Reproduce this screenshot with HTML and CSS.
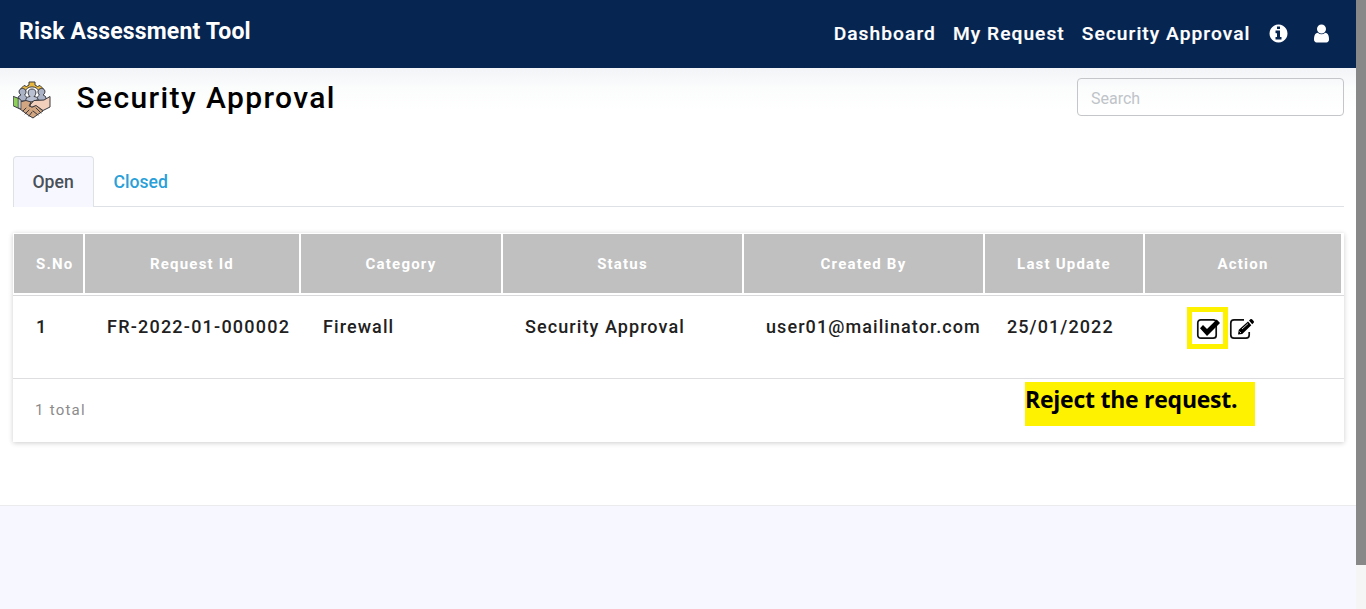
FILE: index.html
```
<!DOCTYPE html>
<html lang="en">
<head>
<meta charset="utf-8">
<title>Risk Assessment Tool</title>
<link rel="stylesheet" href="styles.css">
</head>
<body>
<div class="page">
  <header class="navbar">
    <div class="brand">Risk Assessment Tool</div>
    <nav class="nav">
      <a>Dashboard</a>
      <a>My Request</a>
      <a>Security Approval</a>
      <svg class="nav-info" viewBox="0 0 1792 1792"><path d="M1152 1376v-160q0-14-9-23t-23-9h-96v-512q0-14-9-23t-23-9h-320q-14 0-23 9t-9 23v160q0 14 9 23t23 9h96v320h-96q-14 0-23 9t-9 23v160q0 14 9 23t23 9h448q14 0 23-9t9-23zm-128-896v-160q0-14-9-23t-23-9h-192q-14 0-23 9t-9 23v160q0 14 9 23t23 9h192q14 0 23-9t9-23zm640 416q0 209-103 385.5t-279.5 279.5-385.5 103-385.5-103-279.5-279.5-103-385.5 103-385.5 279.5-279.5 385.5-103 385.5 103 279.5 279.5 103 385.5z"/></svg>
      <svg class="nav-user" viewBox="0 0 1792 1792"><path d="M1536 1399q0 109-62.500 187t-150.500 78h-854q-88 0-150.500-78t-62.500-187q0-85 8.500-160.500t31.500-152 58.500-131 94-89 134.500-34.500q131 128 313 128t313-128q76 0 134.500 34.500t94 89 58.500 131 31.500 152 8.500 160.500zm-256-887q0 159-112.500 271.500t-271.500 112.500-271.500-112.500-112.500-271.500 112.500-271.500 271.500-112.500 271.500 112.500 112.500 271.500z"/></svg>
    </nav>
  </header>
  <main class="content">
    <div class="title-row">
      <svg class="logo" viewBox="0 0 38 38" stroke="#3a3a40" stroke-width="1" stroke-linejoin="round" stroke-linecap="round">
        <path fill="#e9b83e" d="M9 10 8 7.500 11 4.500 13.500 5.500 16 4V1H22V4L24.500 5.500 27 4.500 30 7.500 29 10 26 10A8 8 0 0 0 12 10Z"/>
        <path fill="#aab2c6" d="M5 17C5 15 7 14.500 8 14 5 12 5.500 7.500 9.500 7.500S14 12 11.500 14C13 15 14 16 14 20H5Z"/>
        <path fill="#aab2c6" d="M33 17C33 15 31 14.500 30 14 33 12 32.500 7.500 28.500 7.500S24 12 26.500 14C25 15 24 16 24 20H33Z"/>
        <path fill="#b9c0d1" d="M12.500 21C12.500 17 14 16 17 15.500 14 13 14.500 8 19 8S24 13 21 15.500C24 16 25.500 17 25.500 21Z"/>
        <path fill="#edc3a5" d="M18 21 24 19 31 20V28L20 36 17 35Z"/>
        <path fill="#d3a682" d="M7 21 13 19.500 18 21 16 25 20 26 23 24 30 30 27 32 24 34 20 37 15 34 7 28Z"/>
        <path fill="#f1cfba" d="M17 24 21 19.500 31 19 37 15.500V26L30 29.500 23 24.500 19 26Z"/>
        <path fill="#8fd05b" d="M.600 15.500 7 18V28L.600 25Z"/>
        <path fill="#c5cbda" stroke-width=".7" d="M5.500 17.500 8 19V28L5.500 27Z"/>
        <path fill="none" d="M10 30 13 27M12 33 16 29M16 35 19 31M20 30 25 34M23 27 28 32"/>
      </svg>
      <h1>Security Approval</h1>
      <input class="search" type="text" placeholder="Search">
    </div>
    <div class="tabs">
      <a class="tab tab-active">Open</a>
      <a class="tab">Closed</a>
    </div>
    <section class="card">
      <div class="grid head">
        <div>S.No</div><div>Request Id</div><div>Category</div><div>Status</div><div>Created By</div><div>Last Update</div><div>Action</div>
      </div>
      <div class="grid row">
        <div>1</div><div class="request-id">FR-2022-01-000002</div><div>Firewall</div><div>Security Approval</div><div>user01@mailinator.com</div><div>25/01/2022</div>
        <div class="actions">
          <span class="highlight"><svg class="icon" viewBox="0 0 26 22"><rect x="1.800" y="1.800" width="18.400" height="18.400" rx="3"/><path class="solid" d="M4 10.200 7 7 11 11 20.700 1.500 24 5 11 18Z"/></svg></span>
          <svg class="icon" viewBox="0 0 26 22"><path d="M15 1.800H5Q1.800 1.800 1.800 5V17Q1.800 20.200 5 20.200H17Q20.200 20.200 20.200 17V14"/><path class="solid" d="M9 16.500 9.800 11.800 19 3.500 22.300 7.200 13.200 15.900ZM20 2.600 21.700 1.100Q22.300.700 23 1.300L24.800 3.300Q25.300 4 24.700 4.700L23.200 6.300Z"/><path class="shine" d="M13 11 19 5.600M10.500 13.500 12 15"/></svg>
        </div>
      </div>
      <div class="foot">1 total</div>
      <div class="note">Reject the request.</div>
    </section>
  </main>
</div>
<div class="scrollbar"><div class="thumb"></div></div>
</body>
</html>
```
FILE: styles.css
```
* { box-sizing: border-box; }
body {
  margin: 0;
  height: 609px;
  display: flex;
  overflow: hidden;
  background: #f7f7ff;
  font-family: Roboto, sans-serif;
}
.page { flex: 1; min-width: 0; }
.scrollbar { width: 10px; background: #f5f5f5; }
.thumb { height: 565px; background: #888; }
.navbar {
  height: 68px;
  padding: 0 24.5px 0 19px;
  display: flex;
  justify-content: space-between;
  background: #072551;
  color: #fff;
}
.brand { font-size: 23px; font-weight: 700; letter-spacing: .18px; line-height: 64px; }
.nav {
  display: flex;
  align-items: center;
  height: 67px;
  font-size: 19.2px;
  font-weight: 500;
  letter-spacing: 1.05px;
}
.nav a { margin-right: 17px; -webkit-text-stroke: .2px #fff; }
.nav svg { width: 21px; height: 21px; margin-top: -1px; fill: #fff; }
.nav .nav-user { margin-left: 22px; }
.content {
  height: 438px;
  padding: 10px 12px 0 13px;
  border-bottom: 1px solid #ebebee;
  background: linear-gradient(#f3f4f7, #fbfcfc 20px, #fff 42px);
}
.title-row { display: flex; height: 78px; align-items: flex-start; }
.logo { width: 38px; height: 38px; margin-top: 3px; }
h1 {
  margin: 1px 0 0 25.5px;
  font-size: 30px;
  line-height: 38px;
  font-weight: 500;
  letter-spacing: 1.38px;
  color: #000;
}
.search {
  margin-left: auto;
  width: 267px;
  height: 38px;
  padding: 4px 13px 2px;
  border: 1px solid #c4c6c9;
  border-radius: 4px;
  background: transparent;
  font: 16px Roboto, sans-serif;
}
.search::placeholder { color: #bfc4c9; opacity: 1; }
.tabs {
  display: flex;
  height: 51px;
  border-bottom: 1px solid #dee2e6;
}
.tab {
  height: 51px;
  padding: 0 18.5px;
  border: 1px solid transparent;
  border-bottom: 0;
  border-radius: 4px 4px 0 0;
  font-size: 17.6px;
  font-weight: 500;
  line-height: 50px;
  color: #2a9fd8;
}
.tab-active { width: 81px; background: #f7f7ff; border-color: #dee2e6; color: #495057; }
.card {
  position: relative;
  height: 209px;
  margin-top: 26px;
  background: #fff;
  box-shadow: 0 1px 5px rgba(0,0,0,.2);
}
.grid { display: grid; grid-template-columns: 71px 216px 202px 241px 241px 160px 198px; }
.head { height: 63px; border-bottom: 1px solid #d9d9db; }
.head div {
  height: 61px;
  border: 1px solid #fff;
  background: #c0c0c0;
  color: #fff;
  font-size: 15px;
  font-weight: 700;
  letter-spacing: 1.2px;
  line-height: 60px;
  text-align: center;
}
.head div:first-child { text-align: left; padding-left: 22px; }
.row {
  height: 83px;
  border-bottom: 1px solid #dedee0;
  color: #212121;
  font-size: 18px;
  font-weight: 500;
  letter-spacing: 1.08px;
  line-height: 62px;
}
.row > div { padding-left: 23px; white-space: nowrap; }
.row .request-id { letter-spacing: 1.22px; }
.row .actions { display: flex; padding: 11px 0 0 43px; }
.highlight { width: 41px; height: 42px; padding: 5px 0 0 4px; border: 5px solid #fff200; }
.icon { display: block; width: 26px; height: 22px; fill: none; stroke: #111; stroke-width: 1.7; }
.highlight .icon { margin-top: 1px; }
.actions > .icon { margin: 11px 0 0 1px; }
.icon .solid { fill: #000; stroke: none; }
.icon .shine { stroke: #fff; stroke-width: .8; }
.foot { padding-left: 22px; font-size: 15px; letter-spacing: 1.25px; line-height: 62px; color: #8b8b8b; }
.note {
  position: absolute;
  left: 1012px;
  top: 149px;
  width: 230px;
  height: 44px;
  background: #fff200;
  color: #000;
  font: 700 23px/34px "Open Sans", sans-serif;
  letter-spacing: -.25px;
  white-space: nowrap;
}
```
